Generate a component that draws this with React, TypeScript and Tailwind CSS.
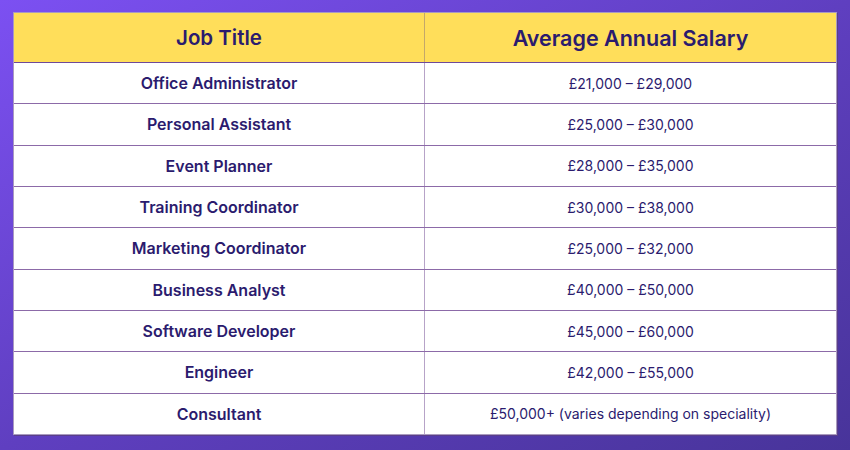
import React from "react";

const rows: [string, string][] = [
  ["Office Administrator", "£21,000 – £29,000"],
  ["Personal Assistant", "£25,000 – £30,000"],
  ["Event Planner", "£28,000 – £35,000"],
  ["Training Coordinator", "£30,000 – £38,000"],
  ["Marketing Coordinator", "£25,000 – £32,000"],
  ["Business Analyst", "£40,000 – £50,000"],
  ["Software Developer", "£45,000 – £60,000"],
  ["Engineer", "£42,000 – £55,000"],
  ["Consultant", "£50,000+ (varies depending on speciality)"],
];

export default function App() {
  return (
    <div
      className="w-[850px] h-[450px] bg-gradient-to-br from-[#7c50f2] via-[#5f3fc0] to-[#48349a] pt-[12px] pl-[13px]"
      style={{ fontFamily: "Inter, 'Noto Sans', sans-serif" }}
    >
      <div className="w-[824px] h-[423px] bg-white border border-[#a99ac0] shadow-[1px_1px_0_#5a3f8a] flex flex-col text-[#2b1b6e]">
        <div className="h-[50px] flex bg-[#ffde5a] border-b border-[#6e4a9a]">
          <div className="w-[411px] flex items-center justify-center pt-[2px] text-[20.5px] font-semibold border-r border-[#c4a86a]">
            Job Title
          </div>
          <div className="flex-1 flex items-center justify-center pt-[2px] text-[21.5px] font-semibold">
            Average Annual Salary
          </div>
        </div>
        {rows.map(([t, s], i) => (
          <div
            key={t}
            className={`flex-1 flex ${i < rows.length - 1 ? "border-b border-[#8c6aa8]" : ""}`}
          >
            <div className="w-[411px] flex items-center justify-center text-[16px] font-semibold border-r border-[#b7a3c8]">
              {t}
            </div>
            <div className="flex-1 flex items-center justify-center text-[14px]">
              {s}
            </div>
          </div>
        ))}
      </div>
    </div>
  );
}
